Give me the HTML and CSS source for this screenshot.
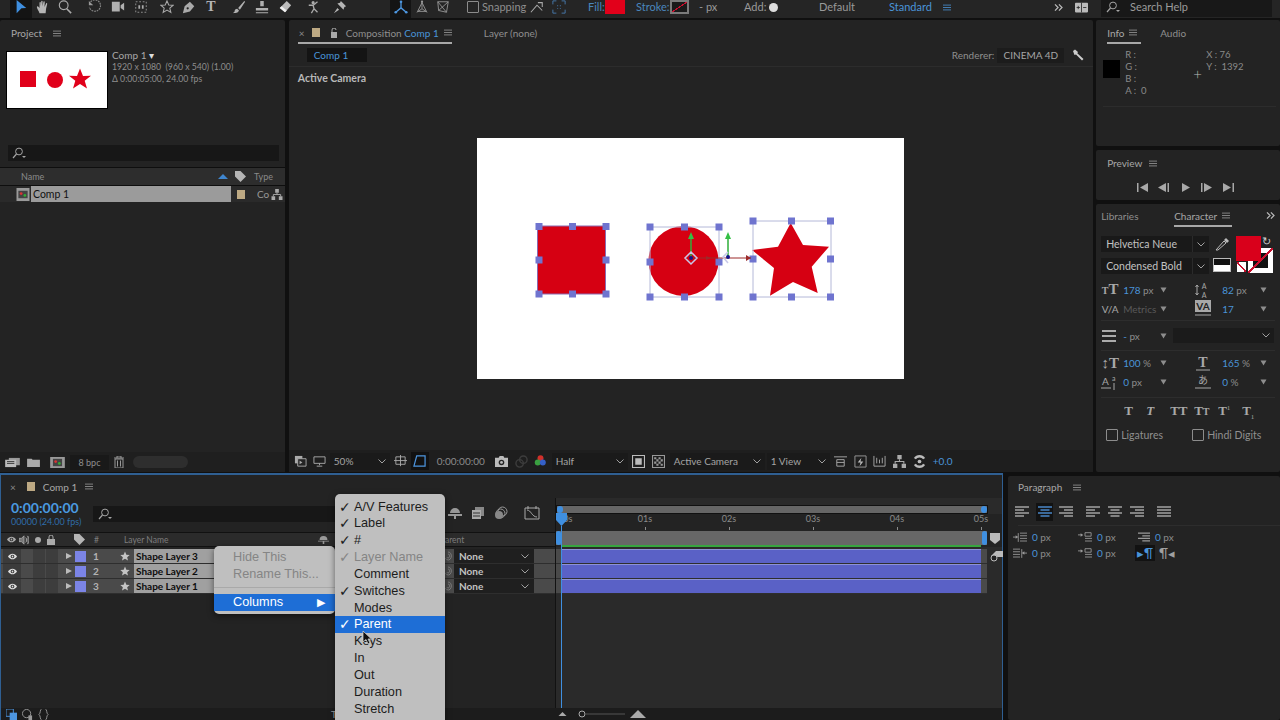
FILE: index.html
```html
<!DOCTYPE html>
<html lang="en">
<head>
    <meta charset="UTF-8">
    <title>After Effects</title>
    <link rel="stylesheet" href="styles.css">
</head>
<body>
<svg class="sprite">
    <symbol id="menu" viewBox="0 0 10 8"><path d="M0 1h10M0 4h10M0 7h10" stroke="currentColor" stroke-width="1" fill="none"/></symbol>
    <symbol id="more" viewBox="0 0 10 8"><path d="M1 .5 4.500 4 1 7.500M5.500 .5 9 4 5.500 7.500" stroke="currentColor" stroke-width="1.400" fill="none"/></symbol>
    <symbol id="eye" viewBox="0 0 12 8"><path d="M0 4c3-5 9-5 12 0-3 5-9 5-12 0z" fill="currentColor"/><circle cx="6" cy="4" r="2.4" fill="#2a2a2a"/><circle cx="6" cy="4" r="1.2" fill="currentColor"/></symbol>
    <symbol id="chev" viewBox="0 0 8 5"><path d="M.5.5 4 4 7.5.5" stroke="currentColor" stroke-width="1" fill="none"/></symbol>
    <symbol id="tri" viewBox="0 0 8 7"><path d="M.5.5h7L4 6.5z" fill="currentColor"/></symbol>
    <symbol id="star" viewBox="0 0 12 12"><path d="M6 .5 7.6 4.4l4 .3-3 2.7 1 4.1L6 9.3l-3.6 2.2 1-4.1-3-2.7 4-.3z" fill="currentColor"/></symbol>
    <symbol id="search" viewBox="0 0 14 12"><circle cx="7" cy="4.5" r="3.4" stroke="currentColor" fill="none"/><path d="M4.5 7 1 11" stroke="currentColor" stroke-width="1.2"/><path d="M10 9h4l-2 2z" fill="currentColor"/></symbol>
    <symbol id="flow" viewBox="0 0 12 12"><path d="M4 0h4v4H4zM0 8h4v4H0zM8 8h4v4H8z" fill="currentColor"/><path d="M6 4v2M2 8V6h8v2" stroke="currentColor" fill="none"/></symbol>
    <symbol id="align" viewBox="0 0 14 12"><path d="M0 1h14M0 4h14M0 7h14M0 10h14" stroke="currentColor" stroke-width="1.4" fill="none"/></symbol>
    <symbol id="alignl" viewBox="0 0 14 12"><path d="M0 1h14M0 4h9M0 7h14M0 10h9" stroke="currentColor" stroke-width="1.4" fill="none"/></symbol>
    <symbol id="alignc" viewBox="0 0 14 12"><path d="M0 1h14M2.500 4h9M0 7h14M2.500 10h9" stroke="currentColor" stroke-width="1.4" fill="none"/></symbol>
    <symbol id="alignr" viewBox="0 0 14 12"><path d="M0 1h14M5 4h9M0 7h14M5 10h9" stroke="currentColor" stroke-width="1.4" fill="none"/></symbol>
    <symbol id="indent" viewBox="0 0 16 12"><path d="M8 1h8M8 4h8M8 7h8M8 10h8M6 1v10" stroke="currentColor" fill="none"/><path d="M0 5.500h4" stroke="currentColor"/><path d="M3 3.500 6 5.500 3 7.500z" fill="currentColor"/></symbol>
    <symbol id="space" viewBox="0 0 16 12"><path d="M8 .5h7v4H8z M8 7h8M8 10h8" stroke="currentColor" fill="none"/><path d="M0 3h4" stroke="currentColor"/><path d="M3 1 6 3 3 5z" fill="currentColor"/></symbol>
    <symbol id="whip" viewBox="0 0 10 12"><path d="M5 1a4 5 0 1 1-3 8M5 3.500a2 2.500 0 1 1-1.500 4" stroke="currentColor" fill="none"/></symbol>
</svg>

<div class="app">
    <header class="toolbar">
        <div class="grip"></div>
        <div class="tools tools-select">
            <span class="tool is-on"><svg viewBox="0 0 16 16"><path d="M3 0 14 9 8.500 9.500 3 15z" fill="#3f8fe0"/></svg></span>
            <span class="tool"><svg viewBox="0 0 16 16"><path d="M4 15C3 12 1 10 1 8c0-1 1.500-1 2 0l1 1V3c0-1 1.500-1 1.500 0v4l.5-5.500c0-1 1.500-1 1.500 0V7l1-5c.2-1 1.500-.8 1.500.2L9.700 8 11.500 4c.4-.9 1.500-.5 1.300.5L11.500 10 11 15z" fill="#b5b5b5"/></svg></span>
            <span class="tool"><svg viewBox="0 0 16 16"><circle cx="6.500" cy="6" r="5" stroke="#aaa" stroke-width="1.300" fill="none"/><path d="m10 10 5 5" stroke="#aaa" stroke-width="1.800"/></svg></span>
        </div>
        <div class="tools tools-camera">
            <span class="tool"><svg viewBox="0 0 16 16"><path d="M3 2a6.500 6.500 0 1 1-1.500 6" stroke="#888" stroke-width="1.300" stroke-dasharray="2 1" fill="none"/><path d="M1 1v5h5" fill="#999"/></svg></span>
            <span class="tool"><svg viewBox="0 0 16 16"><path d="M1 2h9v11H1zM11 6l4-3v9l-4-3z" fill="#b0b0b0"/></svg></span>
            <span class="tool"><svg viewBox="0 0 16 16"><path d="M2 2h12v12H2z" stroke="#999" stroke-dasharray="2 2" fill="none"/><path d="M5 6h2v4H5zM9 6h2v4H9z" fill="#aaa"/></svg></span>
        </div>
        <div class="tools tools-shape">
            <span class="tool"><svg viewBox="0 0 16 16"><path d="M8 1l2 4.600 5 .4-3.800 3.300 1.200 5L8 11.600 3.600 14.300l1.200-5L1 6l5-.4z" stroke="#aaa" stroke-width="1.200" fill="none"/></svg></span>
            <span class="tool"><svg viewBox="0 0 16 16"><path d="M1 15 3 7l6-5 5 5-5 6z" fill="#aaa"/><circle cx="6.500" cy="9.500" r="1.300" fill="#232323"/></svg></span>
            <span class="tool tool-text">T</span>
        </div>
        <div class="tools tools-paint">
            <span class="tool"><svg viewBox="0 0 16 16"><path d="M14 1 7 9l2 2 6-9zM6 10c-2 0-3 1-3 3l-2 2c3 0 6 0 7-3z" fill="#b0b0b0"/></svg></span>
            <span class="tool"><svg viewBox="0 0 16 16"><path d="M6 1h4v6H6zM1 9h14v3H1zM1 14h14v1H1z" fill="#b0b0b0"/></svg></span>
            <span class="tool"><svg viewBox="0 0 16 16"><path d="M10 1l5 5-7 8-6-5z" fill="#bbb"/><path d="M2 9l6 5 2-2-6-5z" fill="#eee"/></svg></span>
        </div>
        <div class="tools tools-puppet">
            <span class="tool"><svg viewBox="0 0 16 16"><circle cx="7" cy="3" r="1.800" fill="#aaa"/><path d="M2 6l5 0 5-4M7 6l1 4-3 5M8 10l4 4" stroke="#aaa" stroke-width="1.500" fill="none"/></svg></span>
            <span class="tool"><svg viewBox="0 0 16 16"><path d="M9 1l6 6-2 1-1 3-7-7 3-1zM5 9l-4 6 6-4z" fill="#b5b5b5"/></svg></span>
        </div>
        <div class="tools tools-axis">
            <span class="tool is-on"><svg viewBox="0 0 16 16"><path d="M8 2v7M8 9l-6 5M8 9l6 5" stroke="#4d96e0" stroke-width="1.500"/><circle cx="8" cy="2" r="1.500" fill="#4d96e0"/><circle cx="2" cy="14" r="1.500" fill="#4d96e0"/><circle cx="14" cy="14" r="1.500" fill="#4d96e0"/></svg></span>
            <span class="tool"><svg viewBox="0 0 16 16"><path d="M8 3 3 13h10z" stroke="#999" fill="none"/><path d="M8 3v7M8 10l-6 4M8 10l6 4" stroke="#999"/><circle cx="8" cy="2" r="1.300" fill="#999"/></svg></span>
            <span class="tool"><svg viewBox="0 0 16 16"><path d="M2 2l12 0-2 12-9-2zM2 2l10 12M14 2 3 12" stroke="#999" fill="none"/></svg></span>
        </div>
        <div class="snap"><span class="check"></span><span class="snap-label">Snapping</span></div>
        <div class="snap-icons">
            <svg viewBox="0 0 16 16"><path d="M1 14 8 6l6 6M9 3h5v5" stroke="#aaa" stroke-width="1.200" fill="none"/></svg>
            <svg viewBox="0 0 16 16"><path d="M1 5V1h4M11 1h4v4M15 11v4h-4M5 15H1v-4" stroke="#4a7fb5" fill="none"/><path d="M6 6h1v1H6zM9 6h1v1H9zM6 9h1v1H6zM9 9h1v1H9z" fill="#4a7fb5"/></svg>
        </div>
        <div class="fill-group"><span class="blue">Fill:</span><span class="fill-swatch"></span></div>
        <div class="stroke-group"><span class="blue">Stroke:</span><span class="stroke-swatch"></span></div>
        <span class="stroke-px">- px</span>
        <div class="add"><span>Add:</span><span class="add-dot"></span></div>
        <span class="ws-default">Default</span>
        <span class="ws-standard blue">Standard</span>
        <svg class="ws-menu ic-menu blue"><use href="#menu"/></svg>
        <svg class="ic-more ws-more"><use href="#more"/></svg>
        <svg class="ws-icon" viewBox="0 0 16 12"><rect width="16" height="12" rx="1" fill="#bbb"/><path d="M8 0v12" stroke="#222"/><path d="M2 6h4M4 4v4M10 6h4" stroke="#222"/></svg>
        <div class="help"><svg class="ic-search"><use href="#search"/></svg><span>Search Help</span></div>
    </header>

    <div class="top">
        <section class="panel project">
            <div class="tabs"><span class="tab-title">Project</span><svg class="ic-menu"><use href="#menu"/></svg></div>
            <div class="proj-info">
                <svg class="thumb" viewBox="0 0 100 56">
                    <rect width="100" height="56" fill="#fff"/>
                    <rect x="13" y="19" width="16" height="16" fill="#e0001a"/>
                    <circle cx="48" cy="28" r="8" fill="#e0001a"/>
                    <path d="M73 16.500 76 24l8-.3-6.300 5 2.300 7.800-7-4.500-7 4.500 2.300-7.800-6.300-5 8 .3z" fill="#e0001a"/>
                </svg>
                <div class="proj-text">
                    <div class="proj-name">Comp 1 <span class="caret">&#9662;</span></div>
                    <div>1920 x 1080&nbsp; (960 x 540) (1.00)</div>
                    <div>&Delta; 0:00:05:00, 24.00 fps</div>
                </div>
            </div>
            <div class="search-box"><svg class="ic-search"><use href="#search"/></svg></div>
            <div class="proj-head">
                <span class="ph-name">Name</span>
                <svg class="ph-sort" viewBox="0 0 10 5"><path d="M0 5 5 0l5 5z" fill="#3f86cf"/></svg>
                <svg class="ph-tag" viewBox="0 0 12 12"><path d="M0 0h6l6 6-6 6-6-6z" fill="#b5b5b5"/></svg>
                <span class="ph-type">Type</span>
            </div>
            <div class="proj-row">
                <svg class="comp-icon" viewBox="0 0 14 14"><rect width="14" height="14" fill="#9a9a9a"/><rect x="2" y="3" width="10" height="8" fill="#444"/><circle cx="5" cy="6" r="1.500" fill="#d33"/><circle cx="9" cy="8" r="1.500" fill="#3a3"/></svg>
                <span class="comp-name">Comp 1</span>
                <span class="swatch-sand"></span>
                <span class="comp-type">Co</span>
                <svg class="ic-flow"><use href="#flow"/></svg>
            </div>
            <div class="spacer"></div>
            <div class="proj-foot">
                <svg class="foot-ic" viewBox="0 0 16 12"><path d="M4 1h12v8H4z" fill="#999"/><path d="M0 3h12v8H0z" fill="#bbb"/><path d="M2 5h8M2 7h8" stroke="#333"/></svg>
                <svg class="foot-ic" viewBox="0 0 16 12"><path d="M1 2h5l1 1h8v8H1z" fill="#aaa"/></svg>
                <svg class="foot-ic" viewBox="0 0 16 12"><rect width="16" height="12" fill="#9a9a9a"/><rect x="3" y="2" width="10" height="8" fill="#444"/><circle cx="6" cy="5" r="1.500" fill="#d33"/><circle cx="10" cy="7" r="1.500" fill="#3a3"/></svg>
                <span class="bpc">8 bpc</span>
                <svg class="foot-trash" viewBox="0 0 10 12"><path d="M0 2h10M3 2V0h4v2M1 3h8v9H1zM3.500 4.500v6M6.500 4.500v6" stroke="#999" fill="none"/></svg>
                <span class="pill"></span>
            </div>
        </section>

        <section class="panel comp">
            <div class="tabs comp-tabs">
                <div class="tab-on comp-tab">
                    <span class="close">&times;</span>
                    <span class="swatch-sand"></span>
                    <svg class="lock" viewBox="0 0 8 10"><path d="M1 4h6v6H1z" fill="#aaa"/><path d="M2 4V2a2 2 0 0 1 4 0" stroke="#aaa" fill="none"/></svg>
                    <span class="tab-title">Composition <span class="blue">Comp 1</span></span>
                    <svg class="ic-menu"><use href="#menu"/></svg>
                </div>
                <span class="tab-title layer-tab">Layer (none)</span>
            </div>
            <div class="comp-sub">
                <span class="comp-chip blue">Comp 1</span>
                <span class="renderer">Renderer:</span>
                <span class="renderer-chip">CINEMA 4D</span>
                <svg class="wrench" viewBox="0 0 12 12"><path d="M1 2 3 .5 6 3 5.300 4.200 11.500 10 10 11.500 4 5.500 2.500 6z" fill="#ccc"/></svg>
            </div>
            <div class="viewer">
                <span class="cam-label">Active Camera</span>
                <svg class="canvas" viewBox="477 138 427 241">
                    <rect x="477" y="138" width="427" height="241" fill="#fff"/>
                    <rect x="537.500" y="226" width="68" height="68" fill="#d60012" stroke="#8a6ab0"/>
                    <circle cx="683.500" cy="261" r="35" fill="#d60012"/>
                    <path d="M790.700 223 803 245 829 246.700 811.700 266.700 817.700 293 793 282 770 295.700 774 268 752 250 778 246.700z" fill="#d60012"/>
                    <path class="bbox" d="M650 227h69v70h-69zM753 221h78v76h-78z"/>
                    <g class="handles">
                        <rect x="535.500" y="223" width="7" height="7"/><rect x="569" y="223" width="7" height="7"/><rect x="602.500" y="223" width="7" height="7"/>
                        <rect x="535.500" y="256.500" width="7" height="7"/><rect x="602.500" y="256.500" width="7" height="7"/>
                        <rect x="535.500" y="290.500" width="7" height="7"/><rect x="569" y="290.500" width="7" height="7"/><rect x="602.500" y="290.500" width="7" height="7"/>
                        <rect x="646.500" y="223.500" width="7" height="7"/><rect x="681" y="223.500" width="7" height="7"/><rect x="715.500" y="223.500" width="7" height="7"/>
                        <rect x="646.500" y="258.500" width="7" height="7"/><rect x="715.500" y="258.500" width="7" height="7"/>
                        <rect x="646.500" y="293.500" width="7" height="7"/><rect x="681" y="293.500" width="7" height="7"/><rect x="715.500" y="293.500" width="7" height="7"/>
                        <rect x="749.500" y="217.500" width="7" height="7"/><rect x="788" y="217.500" width="7" height="7"/><rect x="827" y="217.500" width="7" height="7"/>
                        <rect x="749.500" y="255.500" width="7" height="7"/><rect x="827" y="255.500" width="7" height="7"/>
                        <rect x="749.500" y="293.500" width="7" height="7"/><rect x="788" y="293.500" width="7" height="7"/><rect x="827" y="293.500" width="7" height="7"/>
                    </g>
                    <path d="M691 258V238M728 257V238" stroke="#2fae3a" stroke-width="1.500"/>
                    <path d="M691 232l-3 7h6zM728 232l-3 7h6z" fill="#35c045"/>
                    <path d="M691 258h60" stroke="#9c2a2a"/>
                    <path d="M706 256l5 2-5 2zM746 255l5 3-5 3z" fill="#9c2a2a"/>
                    <path d="M691 252l6 6-6 6-6-6zM728 252l-5 5 5 6" stroke="#c8c8e8" stroke-width="1.500" fill="none"/>
                    <circle cx="691" cy="258" r="2" fill="#14148a"/><circle cx="728" cy="257" r="2" fill="#14148a"/>
                </svg>
            </div>
            <div class="viewer-bar">
                <svg viewBox="0 0 14 12"><path d="M1 0h8v8H1z" fill="#aaa"/><path d="M4 3h9v8H4z" stroke="#aaa" fill="#232323"/><path d="M6 5l3 2-3 2z" fill="#aaa"/></svg>
                <svg viewBox="0 0 14 12"><path d="M1 1h12v7H1z" stroke="#aaa" fill="none"/><path d="M7 8v2M4 11h6" stroke="#aaa"/></svg>
                <div class="vb-drop"><span>50%</span><svg class="ic-chev"><use href="#chev"/></svg></div>
                <svg viewBox="0 0 14 14"><path d="M2 2h10v8H2zM7 0v12M0 6h14" stroke="#aaa" fill="none"/></svg>
                <span class="vb-on"><svg viewBox="0 0 14 14"><path d="M4 1h9v11H1z" stroke="#4d96e0" stroke-width="1.300" fill="none"/></svg></span>
                <span class="vb-time">0:00:00:00</span>
                <svg viewBox="0 0 14 12"><path d="M0 2h4l1-2h4l1 2h4v10H0z" fill="#bbb"/><circle cx="7" cy="7" r="3" fill="#232323"/><circle cx="7" cy="7" r="1.500" fill="#bbb"/></svg>
                <svg viewBox="0 0 14 14"><circle cx="5" cy="9" r="4" stroke="#3d3d3d" stroke-width="1.500" fill="none"/><circle cx="9" cy="5" r="4" stroke="#3d3d3d" stroke-width="1.500" fill="none"/></svg>
                <svg viewBox="0 0 14 14"><circle cx="7" cy="3.500" r="3.200" fill="#d0302a"/><circle cx="4" cy="8" r="3.200" fill="#3aa040"/><circle cx="9.500" cy="8" r="3.200" fill="#3560c8"/></svg>
                <div class="vb-drop"><span>Half</span><svg class="ic-chev"><use href="#chev"/></svg></div>
                <svg viewBox="0 0 12 12"><path d="M.5.500h11v11H.5z" stroke="#bbb" fill="none"/><path d="M3 3h6v6H3z" fill="#bbb"/></svg>
                <svg viewBox="0 0 12 12"><path d="M.5.500h11v11H.5z" stroke="#999" fill="none"/><path d="M2 2h2v2H2zM6 2h2v2H6zM4 4h2v2H4zM8 4h2v2H8zM2 6h2v2H2zM6 6h2v2H6zM4 8h2v2H4zM8 8h2v2H8z" fill="#999"/></svg>
                <div class="vb-drop"><span>Active Camera</span><svg class="ic-chev"><use href="#chev"/></svg></div>
                <div class="vb-drop"><span>1 View</span><svg class="ic-chev"><use href="#chev"/></svg></div>
                <svg viewBox="0 0 14 14"><path d="M0 2h14M3 5h8v7H3zM3 8h8" stroke="#aaa" fill="none"/></svg>
                <svg viewBox="0 0 14 14"><path d="M1 1h12v12H1z" stroke="#999" fill="none"/><path d="M8 3 4 8h3l-1 4 4-5H7z" fill="#bbb"/></svg>
                <svg viewBox="0 0 14 14"><path d="M1 1v11h12V1M4 3v6M7 5v4M10 3v6" stroke="#aaa" fill="none"/></svg>
                <svg class="vb-flow"><use href="#flow"/></svg>
                <svg viewBox="0 0 14 14"><path d="M2 4a6 6 0 0 1 10 0M12 10a6 6 0 0 1-10 0" stroke="#bbb" stroke-width="2.500" fill="none"/><circle cx="7" cy="7" r="2" fill="#bbb"/></svg>
                <span class="blue vb-exp">+0.0</span>
            </div>
        </section>

        <div class="right-col">
            <section class="panel info">
                <div class="tabs side-tabs">
                    <div class="tab-on info-tab"><span class="tab-title">Info</span><svg class="ic-menu"><use href="#menu"/></svg></div>
                    <span class="tab-title audio-tab">Audio</span>
                </div>
                <div class="info-body">
                    <span class="info-swatch"></span>
                    <div class="info-rgba"><div>R :</div><div>G :</div><div>B :</div><div>A :&nbsp; 0</div></div>
                    <div class="info-cross">+</div>
                    <div class="info-xy"><div>X : 76</div><div>Y :&nbsp; 1392</div></div>
                </div>
            </section>
            <section class="panel preview">
                <div class="tabs side-tabs"><span class="tab-title">Preview</span><svg class="ic-menu preview-menu"><use href="#menu"/></svg></div>
                <div class="transport">
                    <svg viewBox="0 0 11 9"><path d="M0 0h1.500v9H0zM11 0v9L3 4.500z"/></svg>
                    <svg viewBox="0 0 11 9"><path d="M8 0v9L0 4.500zM9.500 0H11v9H9.500z"/></svg>
                    <svg viewBox="0 0 11 9"><path d="M2 0v9l8-4.500z"/></svg>
                    <svg viewBox="0 0 11 9"><path d="M0 0h1.500v9H0zM3 0v9l8-4.500z"/></svg>
                    <svg viewBox="0 0 11 9"><path d="M0 0v9l8-4.500zM9.500 0H11v9H9.500z"/></svg>
                </div>
            </section>
            <section class="panel character">
                <div class="tabs char-tabs">
                    <span class="tab-title libs">Libraries</span>
                    <div class="tab-on char-tab"><span class="tab-title">Character</span><svg class="ic-menu"><use href="#menu"/></svg></div>
                    <svg class="ic-more char-more"><use href="#more"/></svg>
                </div>
                <div class="font-block">
                    <div class="font-drops">
                        <div class="font-drop"><span>Helvetica Neue</span><i><svg class="ic-chev"><use href="#chev"/></svg></i></div>
                        <div class="font-drop"><span>Condensed Bold</span><i><svg class="ic-chev"><use href="#chev"/></svg></i></div>
                    </div>
                    <div class="font-tools">
                        <svg class="dropper" viewBox="0 0 14 14"><path d="M1 13 9 4l2 2-8 7z" stroke="#bbb" fill="none"/><path d="M9 3l2-2 3 3-2 2z" fill="#bbb"/></svg>
                        <div class="bw-chip"></div>
                    </div>
                    <div class="colors">
                        <div class="col-stroke"></div>
                        <div class="col-fill"></div>
                        <div class="col-none"></div>
                        <span class="col-swap">&#8635;</span>
                    </div>
                </div>
                <div class="char-row">
                    <span class="glyph"><small>T</small>T</span><span class="val"><b>178</b> px</span><svg class="ic-tri"><use href="#tri"/></svg>
                    <svg class="glyph-svg glyph-lead" viewBox="0 0 18 18"><text x="10" y="7.500" text-anchor="middle">A</text><text x="10" y="16.500" text-anchor="middle">A</text><path d="M3 4v10M1.500 6 3 4l1.500 2M1.500 12 3 14l1.500-2" stroke="#a8a8a8" fill="none"/></svg><span class="val"><b>82</b> px</span><svg class="ic-tri"><use href="#tri"/></svg>
                </div>
                <div class="char-row">
                    <span class="glyph glyph-va">V/A</span><span class="val val-dim">Metrics</span><svg class="ic-tri"><use href="#tri"/></svg>
                    <svg class="glyph-svg" viewBox="0 0 18 18"><rect x="1" y="0" width="16" height="12" fill="#a8a8a8"/><text class="dark" x="9" y="10" text-anchor="middle">VA</text><path d="M1 15h16" stroke="#a8a8a8"/></svg><span class="val"><b>17</b></span><svg class="ic-tri"><use href="#tri"/></svg>
                </div>
                <div class="char-sep"></div>
                <div class="char-row char-stroke">
                    <svg class="ic-lines" viewBox="0 0 14 12"><path d="M0 1h14M0 6h14M0 11h14" stroke="#aaa" stroke-width="2"/></svg>
                    <span class="val"><b>-</b> px</span><svg class="ic-tri"><use href="#tri"/></svg>
                    <div class="stroke-drop"><svg class="ic-chev"><use href="#chev"/></svg></div>
                </div>
                <div class="char-sep sep-b"></div>
                <div class="char-row">
                    <span class="glyph">&#8597;T</span><span class="val"><b>100</b> %</span><svg class="ic-tri"><use href="#tri"/></svg>
                    <svg class="glyph-svg" viewBox="0 0 18 18"><text class="big" x="9" y="13" text-anchor="middle">T</text><path d="M2 16h14" stroke="#a8a8a8"/></svg><span class="val"><b>165</b> %</span><svg class="ic-tri"><use href="#tri"/></svg>
                </div>
                <div class="char-row">
                    <svg class="glyph-base" viewBox="0 0 18 18"><text x="1" y="12">A</text><text class="tiny" x="11" y="8">a</text><path d="M0 15h10M13 10v7" stroke="#a8a8a8"/></svg><span class="val"><b>0</b> px</span><svg class="ic-tri"><use href="#tri"/></svg>
                    <svg class="glyph-svg" viewBox="0 0 18 18"><text class="cjk" x="9" y="11" text-anchor="middle">あ</text><path d="M1 15h16" stroke="#a8a8a8"/></svg><span class="val"><b>0</b> %</span><svg class="ic-tri"><use href="#tri"/></svg>
                </div>
                <div class="char-sep sep-c"></div>
                <div class="faux-row">
                    <span>T</span><span class="ital">T</span><span>TT</span><span>T<small>T</small></span><span>T<sup>1</sup></span><span>T<sub>1</sub></span>
                </div>
                <div class="check-row">
                    <span class="check"></span><span class="check-label">Ligatures</span>
                    <span class="check check-2"></span><span class="check-label">Hindi Digits</span>
                </div>
            </section>
        </div>
    </div>

    <div class="bottom">
        <section class="timeline">
            <div class="tl-tabs">
                <span class="close">&times;</span>
                <span class="swatch-sand"></span>
                <span class="tab-title">Comp 1</span>
                <svg class="ic-menu"><use href="#menu"/></svg>
            </div>
            <div class="tl-body">
                <div class="tl-left">
                    <div class="tl-ctrl">
                        <div class="tl-time">
                            <div class="time-big">0:00:00:00</div>
                            <div class="time-small">00000 (24.00 fps)</div>
                        </div>
                        <div class="tl-search"><svg class="ic-search"><use href="#search"/></svg></div>
                        <div class="tl-switches">
                            <svg viewBox="0 0 14 12"><path d="M7 1a5 5 0 0 1 5 5H2a5 5 0 0 1 5-5zM0 7h14v2H0zM6 9h2v3H6z" fill="#999"/></svg>
                            <svg viewBox="0 0 14 14"><path d="M4 1h9v9H4z" fill="#888"/><path d="M1 4h9v9H1z" fill="#aaa"/><path d="M2 7h7M2 10h7" stroke="#333"/></svg>
                            <svg viewBox="0 0 14 14"><circle cx="8.500" cy="5.500" r="4.500" stroke="#999" fill="none"/><circle cx="6.500" cy="7.500" r="4.500" stroke="#999" fill="none"/><circle cx="5" cy="9" r="4" fill="#888"/></svg>
                            <svg class="sw-graph" viewBox="0 0 16 14"><path d="M1 2h14v11H1z" stroke="#aaa" fill="none"/><path d="M3 4c4 0 5 7 10 7" stroke="#aaa" fill="none"/><path d="M4 0v3M12 0v3" stroke="#aaa"/></svg>
                        </div>
                    </div>
                    <div class="tl-head">
                        <svg class="lh-eye"><use href="#eye"/></svg>
                        <svg class="lh-sound" viewBox="0 0 12 12"><path d="M0 4h3l3-3v10L3 8H0zM8 3a4 4 0 0 1 0 6M10 1a6 6 0 0 1 0 10" stroke="#aaa" fill="#aaa" fill-opacity=".6"/></svg>
                        <span class="lh-dot"></span>
                        <svg class="lh-lock" viewBox="0 0 8 10"><path d="M0 4h8v6H0z" fill="#aaa"/><path d="M2 4V2a2 2 0 0 1 4 0v2" stroke="#aaa" fill="none"/></svg>
                        <svg class="lh-tag" viewBox="0 0 12 12"><path d="M0 0h6l6 6-6 6-6-6z" fill="#b5b5b5"/></svg>
                        <span class="lh-num">#</span>
                        <span class="lh-name">Layer Name</span>
                        <svg class="lh-sw" viewBox="0 0 14 12"><path d="M7 1a5 5 0 0 1 5 5H2a5 5 0 0 1 5-5zM0 7h14v1H0zM6 8h2v3H6z" fill="#999"/></svg>
                        <span class="lh-parent">Parent</span>
                    </div>
                    <div class="layer">
                        <span class="l-eye"><svg><use href="#eye"/></svg></span><i class="l-box"></i><i class="l-box"></i>
                        <span class="l-tri"></span><span class="l-label"></span><span class="l-num">1</span>
                        <svg class="l-star"><use href="#star"/></svg><span class="l-name">Shape Layer 3</span>
                        <span class="l-whip"><svg><use href="#whip"/></svg></span>
                        <span class="l-parent"><span>None</span><svg class="ic-chev"><use href="#chev"/></svg></span>
                    </div>
                    <div class="layer">
                        <span class="l-eye"><svg><use href="#eye"/></svg></span><i class="l-box"></i><i class="l-box"></i>
                        <span class="l-tri"></span><span class="l-label"></span><span class="l-num">2</span>
                        <svg class="l-star"><use href="#star"/></svg><span class="l-name">Shape Layer 2</span>
                        <span class="l-whip"><svg><use href="#whip"/></svg></span>
                        <span class="l-parent"><span>None</span><svg class="ic-chev"><use href="#chev"/></svg></span>
                    </div>
                    <div class="layer">
                        <span class="l-eye"><svg><use href="#eye"/></svg></span><i class="l-box"></i><i class="l-box"></i>
                        <span class="l-tri"></span><span class="l-label"></span><span class="l-num">3</span>
                        <svg class="l-star"><use href="#star"/></svg><span class="l-name">Shape Layer 1</span>
                        <span class="l-whip"><svg><use href="#whip"/></svg></span>
                        <span class="l-parent"><span>None</span><svg class="ic-chev"><use href="#chev"/></svg></span>
                    </div>
                </div>
                <div class="tl-right">
                    <div class="tl-nav"><i></i><i></i></div>
                    <div class="ruler">
                        <span class="r-first">00s</span>
                        <span>01s</span><span>02s</span><span>03s</span><span>04s</span><span>05s</span>
                    </div>
                    <div class="work-row">
                        <div class="work"><i></i><i></i></div>
                        <svg class="shield" viewBox="0 0 10 11"><path d="M0 0h10v7l-5 4-5-4z" fill="#bbb"/></svg>
                    </div>
                    <div class="green-row"><div class="green"></div></div>
                    <div class="track"><div class="bar"></div><svg class="track-ic" viewBox="0 0 13 12"><path d="M1 6 6 1h7v6H8z" fill="#bbb"/><circle cx="4" cy="8" r="3" stroke="#bbb" fill="#232323"/></svg></div>
                    <div class="track"><div class="bar"></div></div>
                    <div class="track"><div class="bar"></div></div>
                    <div class="cti"><svg viewBox="0 0 11 13"><path d="M0 0h11v7l-5.500 6L0 7z" fill="#3f8fe0"/></svg><i></i></div>
                </div>
            </div>
            <div class="tl-foot">
                <svg class="tf-on" viewBox="0 0 12 12"><path d="M0 0h8v8H0z" stroke="#4d96e0" fill="none"/><path d="M4 4h8v8H4z" fill="#4d96e0"/></svg>
                <svg viewBox="0 0 12 12"><circle cx="5" cy="5" r="4.500" stroke="#999" fill="none"/><path d="M7 7h4v5H7z" fill="#999"/></svg>
                <svg viewBox="0 0 12 12"><path d="M4 0C2 0 3 5 1 6c2 1 1 6 3 6M8 0c2 0 1 5 3 6-2 1-1 6-3 6" stroke="#999" fill="none"/></svg>
                <span class="tf-toggle">T</span>
                <svg class="tf-small" viewBox="0 0 10 5"><path d="M0 5 5 0l5 5z" fill="#aaa"/></svg>
                <svg class="tf-slider" viewBox="0 0 50 8"><circle cx="4" cy="4" r="3" stroke="#aaa" fill="none"/><path d="M8 4h39" stroke="#555"/></svg>
                <svg class="tf-big" viewBox="0 0 16 8"><path d="M0 8 8 0l8 8z" fill="#aaa"/></svg>
            </div>
        </section>

        <section class="panel paragraph">
            <div class="tabs para-tabs"><span class="tab-title">Paragraph</span><svg class="ic-menu"><use href="#menu"/></svg></div>
            <div class="align-row">
                <svg><use href="#alignl"/></svg>
                <span class="align-on"><svg><use href="#alignc"/></svg></span>
                <svg><use href="#alignr"/></svg>
                <svg class="a-gap"><use href="#alignl"/></svg>
                <svg><use href="#alignc"/></svg>
                <svg><use href="#alignr"/></svg>
                <svg class="a-gap"><use href="#align"/></svg>
            </div>
            <div class="para-sep"></div>
            <div class="para-grid">
                <div class="pi"><svg><use href="#indent"/></svg><span class="val"><b>0</b> px</span></div>
                <div class="pi"><svg><use href="#space"/></svg><span class="val"><b>0</b> px</span></div>
                <div class="pi pi-3"><svg><use href="#alignr"/></svg><span class="val"><b>0</b> px</span></div>
                <div class="pi"><svg class="flip"><use href="#indent"/></svg><span class="val"><b>0</b> px</span></div>
                <div class="pi"><svg><use href="#space"/></svg><span class="val"><b>0</b> px</span></div>
                <div class="pi pi-dir"><span class="dir-on">&#9656;&para;</span><span class="dir">&para;&#9666;</span></div>
            </div>
        </section>
    </div>

    <div class="ctx ctx-layer">
        <div class="ctx-item is-off">Hide This</div>
        <div class="ctx-item is-off">Rename This...</div>
        <div class="ctx-sep"></div>
        <div class="ctx-item is-hot">Columns<span class="ctx-arrow">&#9654;</span></div>
    </div>
    <div class="ctx ctx-cols">
        <div class="ctx-item is-checked">A/V Features</div>
        <div class="ctx-item is-checked">Label</div>
        <div class="ctx-item is-checked">#</div>
        <div class="ctx-item is-checked is-off">Layer Name</div>
        <div class="ctx-item">Comment</div>
        <div class="ctx-item is-checked">Switches</div>
        <div class="ctx-item">Modes</div>
        <div class="ctx-item is-checked is-hot">Parent</div>
        <div class="ctx-item">Keys</div>
        <div class="ctx-item">In</div>
        <div class="ctx-item">Out</div>
        <div class="ctx-item">Duration</div>
        <div class="ctx-item">Stretch</div>
    </div>
    <svg class="cursor" viewBox="0 0 10 14"><path d="M1 0v11l3-2.500 2 4.500 2-1-2-4h3.500z" fill="#111" stroke="#ddd" stroke-width=".7"/></svg>
</div>
</body>
</html>
```

FILE: styles.css
```css
html,body{
    margin:0;
    width:1280px;
    height:720px;
    overflow:hidden;
    background:#101010;
}
body{
    font-family:Lato,"Open Sans",sans-serif;
    font-size:10px;
    color:#a3a3a3;
}
svg{
    display:block;
    flex:none;
}
.sprite{
    display:none;
}
.app{
    position:relative;
    width:1280px;
    height:720px;
    overflow:hidden;
    display:flex;
    flex-direction:column;
}
.blue{
    color:#4a94d8;
}
.panel{
    background:#232323;
    border-radius:2px;
}
.spacer{
    flex:1;
}
.ic-menu{
    width:8px;
    height:7px;
    color:#9a9a9a;
}
.ic-more{
    width:9px;
    height:7px;
    color:#bbb;
}
.ic-chev{
    width:8px;
    height:5px;
    color:#a0a0a0;
}
.ic-search{
    width:14px;
    height:12px;
    color:#a5a5a5;
}
.ic-tri{
    width:7px;
    height:6px;
    color:#8d8d8d;
}
.check{
    display:block;
    width:10px;
    height:10px;
    border:1px solid #8c8c8c;
    border-radius:1px;
    flex:none;
}
.swatch-sand{
    display:block;
    width:8px;
    height:9px;
    background:#bda983;
    flex:none;
}
.close{
    color:#8a8a8a;
    font-size:10px;
}

/* toolbar */
.toolbar{
    height:18px;
    box-sizing:border-box;
    padding-bottom:4px;
    flex:none;
    margin-bottom:2px;
    background:#252525;
    display:flex;
    align-items:center;
    font-size:11px;
    line-height:14px;
    color:#999;
}
.grip{
    width:10px;
}
.tools{
    display:flex;
    align-items:center;
}
.tool{
    width:22px;
    height:14px;
    display:flex;
    align-items:center;
    justify-content:center;
}
.tool svg{
    width:14px;
    height:14px;
}
.tool.is-on{
    height:18px;
    margin-bottom:-4px;
    padding-bottom:4px;
    box-sizing:border-box;
    background:#141414;
}
.tool-text{
    font-family:"Liberation Serif",serif;
    font-size:14px;
    font-weight:700;
    color:#b5b5b5;
}
.tools-camera{
    margin-left:7px;
}
.tools-camera .tool,.tools-paint .tool{
    width:23px;
}
.tools-shape{
    margin-left:4px;
}
.tools-paint{
    margin-left:5px;
}
.tools-puppet{
    margin-left:5px;
}
.tools-puppet .tool{
    width:26px;
}
.tools-axis{
    margin-left:37px;
}
.tools-axis .tool{
    width:21px;
}
.snap{
    margin-left:14px;
    display:flex;
    align-items:center;
    width:63px;
    gap:3px;
}
.snap-label{
    color:#8f8f8f;
}
.snap-icons{
    display:flex;
    gap:8px;
}
.snap-icons svg{
    width:14px;
    height:14px;
}
.fill-group{
    margin-left:22px;
    display:flex;
    align-items:flex-start;
    height:14px;
    width:37px;
}
.fill-group .blue,.stroke-group .blue{
    color:#4a86bd;
}
.fill-swatch{
    width:21px;
    height:14px;
    margin-left:auto;
    background:#e2001a;
}
.stroke-group{
    margin-left:11px;
    display:flex;
    align-items:flex-start;
    height:14px;
    width:53px;
}
.stroke-swatch{
    width:21px;
    height:14px;
    margin-left:auto;
    border:2px solid #7b7b7b;
    box-sizing:border-box;
    background:linear-gradient(to bottom right,#1a1a1a 46%,#c8102e 46%,#c8102e 54%,#1a1a1a 54%);
}
.stroke-px{
    margin-left:10px;
    width:20px;
}
.add{
    margin-left:25px;
    display:flex;
    align-items:center;
    gap:3px;
    width:36px;
}
.add-dot{
    width:9px;
    height:9px;
    border-radius:50%;
    background:#ddd;
}
.ws-default{
    margin-left:39px;
    width:70px;
}
.ws-standard{
    width:54px;
}
.ws-menu{
    color:#4a94d8;
}
.ws-more{
    margin-left:103px;
    margin-right:12px;
}
.ws-icon{
    width:13px;
    height:11px;
}
.help{
    margin-left:13px;
    margin-bottom:-3px;
    width:171px;
    height:17px;
    background:#181818;
    display:flex;
    align-items:center;
    gap:10px;
    padding:0 0 3px 5px;
    box-sizing:border-box;
    font-size:11px;
    color:#9b9b9b;
}

/* panel layout */
.top{
    height:452px;
    flex:none;
    display:flex;
    gap:3px;
}
.bottom{
    flex:1;
    margin-top:1px;
    display:flex;
    gap:5px;
    min-height:0;
}
.project{
    width:285px;
    display:flex;
    flex-direction:column;
}
.comp{
    width:805px;
    margin-left:1px;
    display:flex;
    flex-direction:column;
}
.right-col{
    width:184px;
    display:flex;
    flex-direction:column;
    gap:4px;
}
.tabs{
    display:flex;
    align-items:center;
    flex:none;
}
.tab-title{
    color:#a8a8a8;
    font-size:10px;
}
.tab-on{
    display:flex;
    align-items:center;
    height:24px;
    padding-top:3px;
    border-bottom:2px solid #a8a8a8;
    box-sizing:border-box;
}

/* project */
.project .tabs{
    height:26px;
    padding-left:11px;
    gap:11px;
}
.proj-info{
    height:93px;
    margin-top:6px;
    padding-left:7px;
    display:flex;
    gap:5px;
    flex:none;
}
.thumb{
    width:100px;
    height:56px;
    outline:1px solid #000;
}
.proj-text{
    margin-top:-3px;
    line-height:12px;
    font-size:8.700px;
    color:#8e8e8e;
    white-space:nowrap;
}
.proj-name{
    font-size:10px;
    color:#a8a8a8;
}
.caret{
    color:#ddd;
}
.search-box{
    margin:0 6px 0 8px;
    height:16px;
    background:#171717;
    display:flex;
    align-items:center;
    padding-left:4px;
    flex:none;
}
.proj-head{
    margin-top:6px;
    height:17px;
    border-top:1px solid #0e0e0e;
    border-bottom:1px solid #0e0e0e;
    background:#2d2d2d;
    display:flex;
    align-items:center;
    font-size:9px;
    color:#8a8a8a;
    flex:none;
}
.ph-name{
    width:218px;
    padding-left:21px;
    box-sizing:border-box;
}
.ph-sort{
    width:10px;
    height:5px;
}
.ph-tag{
    width:11px;
    height:11px;
    margin-left:7px;
}
.ph-type{
    margin-left:8px;
}
.proj-row{
    height:16px;
    display:flex;
    align-items:center;
    background:#2a2a2a;
    padding-left:16px;
    flex:none;
}
.comp-icon{
    width:14px;
    height:13px;
}
.comp-name{
    margin-left:1px;
    width:200px;
    height:16px;
    line-height:16px;
    background:#9b9b9b;
    color:#111;
    font-size:10.500px;
    padding-left:2px;
    box-sizing:border-box;
}
.proj-row .swatch-sand{
    margin-left:6px;
}
.comp-type{
    margin-left:12px;
    color:#999;
    width:13px;
    overflow:hidden;
}
.ic-flow{
    width:12px;
    height:11px;
    margin-left:1px;
    color:#aaa;
}
.proj-foot{
    height:20px;
    background:#1f1f1f;
    display:flex;
    align-items:center;
    padding-left:5px;
    flex:none;
}
.foot-ic{
    width:15px;
    height:11px;
    margin-right:6px;
}
.foot-ic:nth-child(2){
    margin-right:9px;
}
.foot-ic:nth-child(3){
    margin-right:3px;
}
.bpc{
    width:39px;
    margin-left:2px;
    height:15px;
    line-height:15px;
    text-align:center;
    background:#191919;
    font-size:9px;
    color:#8f8f8f;
}
.foot-trash{
    width:10px;
    height:12px;
    margin-left:5px;
}
.pill{
    width:55px;
    height:12px;
    margin-left:9px;
    border-radius:6px;
    background:#2e2e2e;
}

/* composition */
.comp-tabs{
    height:24px;
    padding-left:9px;
}
.comp-tab{
    width:154px;
}
.comp-tab .close{
    width:13px;
    padding-left:1px;
    box-sizing:border-box;
}
.comp-tab .swatch-sand{
    margin-left:1px;
}
.lock{
    width:8px;
    height:10px;
    margin-left:10px;
}
.comp-tab .tab-title{
    margin-left:8px;
    width:98px;
    white-space:nowrap;
    color:#8f8f8f;
}
.layer-tab{
    margin-left:32px;
    margin-top:2px;
    color:#8f8f8f;
}
.comp-sub{
    height:23px;
    flex:none;
    display:flex;
    align-items:center;
    padding-left:18px;
    border-bottom:1px solid #2c2c2c;
    box-sizing:border-box;
}
.comp-chip{
    width:60px;
    height:14px;
    line-height:14px;
    background:#141414;
    padding-left:7px;
    box-sizing:border-box;
}
.renderer{
    margin-left:585px;
    color:#8f8f8f;
}
.renderer-chip{
    margin-left:3px;
    width:67px;
    height:15px;
    line-height:15px;
    text-align:center;
    background:#1c1c1c;
    color:#a5a5a5;
}
.wrench{
    width:12px;
    height:12px;
    margin-left:8px;
}
.viewer{
    position:relative;
    flex:1;
    display:flex;
    align-items:center;
    justify-content:center;
}
.cam-label{
    position:absolute;
    left:9px;
    top:5px;
    font-size:10.500px;
    font-weight:700;
    color:#b8b8b8;
}
.canvas{
    width:427px;
    height:241px;
}
.bbox{
    fill:none;
    stroke:#b4b8d8;
}
.handles rect{
    fill:#6f74cf;
}
.viewer-bar{
    height:22px;
    flex:none;
    background:#1e1e1e;
    display:grid;
    grid-template-columns:19px 19px 62px 19px 20px 62px 20px 19px 20px 78px 20px 20px 97px 65px 20px 19px 20px 19px 22px 1fr;
    align-items:center;
    justify-items:center;
    padding-left:2px;
    color:#a5a5a5;
}
.viewer-bar svg{
    width:13px;
    height:13px;
}
.viewer-bar .ic-chev{
    width:8px;
    height:5px;
}
.viewer-bar .vb-flow{
    color:#aaa;
}
.vb-drop{
    width:calc(100% - 2px);
    height:17px;
    background:#1a1a1a;
    display:flex;
    align-items:center;
    justify-content:space-between;
    padding:0 4px;
    box-sizing:border-box;
}
.vb-on{
    width:18px;
    height:18px;
    background:#111;
    display:flex;
    align-items:center;
    justify-content:center;
}
.vb-time{
    color:#8c8c8c;
}
.vb-exp{
    justify-self:start;
    margin-left:2px;
}

/* info, preview */
.info{
    height:126px;
    flex:none;
}
.side-tabs{
    padding-left:11px;
}
.info .side-tabs{
    height:24px;
}
.info-tab{
    width:34px;
    gap:5px;
}
.audio-tab{
    margin-left:19px;
    margin-top:2px;
    color:#8f8f8f;
}
.info-body{
    display:flex;
    height:57px;
    border-bottom:1px solid #2c2c2c;
    margin:5px 4px 0 7px;
    font-size:9.500px;
    line-height:12px;
    color:#8a8a8a;
}
.info-swatch{
    display:block;
    width:17px;
    height:18px;
    margin-top:11px;
    background:#000;
}
.info-rgba{
    margin-left:5px;
    width:68px;
}
.info-cross{
    font-size:15px;
    width:13px;
    margin-top:19px;
    color:#bbb;
    font-weight:300;
}
.preview{
    height:50px;
    flex:none;
}
.preview .side-tabs{
    height:26px;
    gap:7px;
}
.transport{
    display:flex;
    justify-content:center;
    gap:10.500px;
    padding-right:6px;
    margin-top:7px;
}
.transport svg{
    width:11px;
    height:9px;
    fill:#a8a8a8;
}

/* character */
.character{
    flex:1;
    padding-left:5px;
}
.char-tabs{
    height:23px;
}
.libs{
    color:#8f8f8f;
    width:73px;
}
.char-tab{
    width:58px;
    height:22px;
    gap:5px;
    padding-top:2px;
}
.char-more{
    margin-left:34px;
}
.font-block{
    margin-top:9px;
    height:38px;
    display:flex;
}
.font-drops{
    width:108px;
    display:flex;
    flex-direction:column;
    gap:6px;
}
.font-drop{
    height:16px;
    display:flex;
    align-items:center;
    background:#191919;
    color:#c2c2c2;
    font-size:10.500px;
    padding-left:5px;
    box-sizing:border-box;
}
.font-drop span{
    width:87px;
}
.font-drop i{
    height:16px;
    width:16px;
    border-left:1px solid #2b2b2b;
    display:flex;
    align-items:center;
    justify-content:center;
}
.font-tools{
    margin-left:4px;
    width:18px;
}
.dropper{
    width:14px;
    height:16px;
    margin-left:2px;
}
.bw-chip{
    margin-top:6px;
    width:18px;
    height:14px;
    border:1px solid #bbb;
    box-sizing:border-box;
    background:linear-gradient(#111 50%,#fff 50%);
}
.colors{
    position:relative;
    margin-left:5px;
    width:38px;
    height:38px;
}
.col-fill{
    position:absolute;
    left:0;
    top:0;
    width:25px;
    height:25px;
    background:#d9001b;
}
.col-stroke{
    position:absolute;
    left:12px;
    top:12px;
    width:25px;
    height:25px;
    background:
        linear-gradient(to bottom right,transparent 47%,#c8102e 47%,#c8102e 53%,transparent 53%),
        linear-gradient(#111,#111) center / 15px 15px no-repeat,
        #fff;
    outline:1px solid #222;
}
.col-none{
    position:absolute;
    left:1px;
    top:26px;
    width:9px;
    height:10px;
    background:linear-gradient(to top right,#fff 44%,#c8102e 44%,#c8102e 56%,#fff 56%);
}
.col-swap{
    position:absolute;
    left:26px;
    top:-2px;
    font-size:11px;
    color:#ccc;
}
.char-row{
    height:19px;
    display:grid;
    grid-template-columns:22px 37px 10px 52px 38px 12px;
    align-items:center;
    justify-items:start;
}
.font-block + .char-row{
    margin-top:6px;
}
.val{
    color:#8c8c8c;
    white-space:nowrap;
}
.val b{
    font-weight:400;
    color:#4a94d8;
}
.val-dim{
    color:#595959;
}
.glyph{
    width:18px;
    font-family:"Liberation Serif",serif;
    font-size:15px;
    font-weight:700;
    color:#a8a8a8;
    line-height:16px;
    text-align:center;
    white-space:nowrap;
}
.glyph small{
    font-size:10px;
}
.glyph-va{
    font-family:Lato,sans-serif;
    font-size:10px;
    font-weight:400;
}
.glyph-svg,.glyph-base{
    width:18px;
    height:18px;
    fill:#a8a8a8;
    font-family:Lato,sans-serif;
    font-size:10px;
}
.glyph-svg{
    margin-left:24px;
}
.glyph-lead{
    font-size:7px;
}
.glyph-svg .dark{
    fill:#222;
    font-weight:700;
}
.glyph-svg .big{
    font-family:"Liberation Serif",serif;
    font-size:14px;
    font-weight:700;
}
.glyph-svg .cjk{
    font-family:"Noto Sans CJK JP",sans-serif;
    font-size:10px;
}
.glyph-base .tiny{
    font-size:7px;
}
.char-sep{
    height:1px;
    margin:2px 5px 0 0;
    background:#2d2d2d;
}
.char-stroke{
    margin-top:7px;
    height:15px;
}
.ic-lines{
    width:14px;
    height:12px;
    margin-left:1px;
}
.stroke-drop{
    grid-column:4 / span 3;
    width:101px;
    margin-left:3px;
    height:15px;
    background:#1b1b1b;
    display:flex;
    align-items:center;
    justify-content:flex-end;
    padding-right:4px;
    box-sizing:border-box;
}
.sep-b{
    margin-top:7px;
    margin-bottom:2px;
}
.sep-c{
    margin-top:6px;
}
.faux-row{
    height:16px;
    margin-top:5px;
    padding-left:23px;
    display:grid;
    grid-template-columns:22px 24px 24px 24px 24px 20px;
    align-items:center;
    font-family:"Liberation Serif",serif;
    font-size:13px;
    font-weight:700;
    color:#a8a8a8;
}
.faux-row small{
    font-size:10px;
}
.faux-row sup,.faux-row sub{
    font-size:7px;
    line-height:0;
    font-weight:400;
}
.ital{
    font-style:italic;
}
.check-row{
    margin-top:8px;
    height:16px;
    padding-left:5px;
    display:flex;
    align-items:center;
}
.check-label{
    margin-left:3px;
    width:71px;
    font-size:10.500px;
    color:#8f8f8f;
}

/* timeline */
.timeline{
    width:1003px;
    flex:none;
    box-sizing:border-box;
    border-top:2px solid #2f5f92;
    border-left:1px solid #2f5f92;
    border-right:1px solid #2f5f92;
    background:#232323;
    display:flex;
    flex-direction:column;
    min-height:0;
}
.tl-tabs{
    height:23px;
    flex:none;
    display:flex;
    align-items:center;
    padding-left:9px;
}
.tl-tabs .swatch-sand{
    margin-left:11px;
}
.tl-tabs .tab-title{
    margin-left:8px;
    width:42px;
}
.tl-body{
    flex:1;
    display:grid;
    grid-template-columns:554px minmax(0,1fr);
    min-height:0;
}
.tl-ctrl{
    height:34px;
    display:flex;
}
.tl-time{
    margin-left:10px;
    width:82px;
    margin-top:3px;
}
.time-big{
    font-size:14px;
    font-weight:700;
    line-height:14px;
    color:#4a9ae0;
}
.time-small{
    font-size:9px;
    line-height:13px;
    color:#2f6ca8;
}
.tl-search{
    width:242px;
    height:16px;
    margin-top:8px;
    background:#171717;
    display:flex;
    align-items:center;
    padding-left:5px;
    box-sizing:border-box;
}
.tl-switches{
    margin-left:113px;
    margin-top:8px;
    display:flex;
    gap:9px;
}
.tl-switches svg{
    width:14px;
    height:14px;
}
.tl-switches .sw-graph{
    margin-left:7px;
    width:16px;
}
.tl-head{
    height:15px;
    display:flex;
    align-items:center;
    background:#2b2b2b;
    border-top:1px solid #111;
    border-bottom:1px solid #111;
    box-sizing:border-box;
    margin-bottom:2px;
    font-size:8.500px;
    color:#7d7d7d;
}
.lh-eye{
    width:9px;
    height:7px;
    margin-left:6px;
    color:#aaa;
}
.lh-sound{
    width:10px;
    height:10px;
    margin-left:3px;
}
.lh-dot{
    width:6px;
    height:6px;
    margin-left:6px;
    border-radius:50%;
    background:#aaa;
}
.lh-lock{
    width:8px;
    height:10px;
    margin-left:6px;
}
.lh-tag{
    width:11px;
    height:11px;
    margin-left:19px;
}
.lh-num{
    margin-left:9px;
    width:30px;
}
.lh-name{
    width:194px;
}
.lh-sw{
    width:11px;
    height:10px;
}
.lh-parent{
    margin-left:111px;
}
.layer{
    height:15px;
    display:flex;
    align-items:center;
    background:#4a4a4a;
    border-bottom:1px solid #2e2e2e;
    box-sizing:border-box;
}
.l-eye{
    width:18px;
    height:14px;
    margin-left:2px;
    background:#3b3b3b;
    display:flex;
    align-items:center;
    justify-content:center;
}
.l-eye svg{
    width:9px;
    height:7px;
    color:#ddd;
}
.l-box{
    display:block;
    width:12px;
    height:14px;
    margin-left:1px;
    background:#3d3d3d;
}
.l-eye + .l-box{
    margin-left:12px;
}
.l-tri{
    margin-left:8px;
    width:0;
    height:0;
    border-left:6px solid #bbb;
    border-top:3.500px solid transparent;
    border-bottom:3.500px solid transparent;
}
.l-label{
    margin-left:3px;
    width:11px;
    height:11px;
    background:#7b84e6;
}
.l-num{
    margin-left:7px;
    width:27px;
    font-weight:700;
    color:#b3b3b3;
}
.l-star{
    width:10px;
    height:10px;
    color:#c4c4c4;
}
.l-name{
    margin-left:4px;
    width:200px;
    height:14px;
    line-height:14px;
    background:#a0a0a0;
    padding-left:2px;
    box-sizing:border-box;
    color:#0d0d0d;
    font-weight:700;
}
.l-whip{
    width:120px;
    display:flex;
    justify-content:flex-end;
    padding-right:2px;
    box-sizing:border-box;
    color:#8a8a8a;
}
.l-whip svg{
    width:8px;
    height:10px;
}
.l-parent{
    width:80px;
    height:14px;
    background:#1f1f1f;
    color:#c2c2c2;
    display:flex;
    align-items:center;
    justify-content:space-between;
    padding:0 5px;
    box-sizing:border-box;
    font-weight:700;
}
.tl-right{
    position:relative;
    min-width:0;
    border-left:1px solid #121212;
    background:#2a2a2a;
}
.tl-nav{
    margin:7px 14px 0 0;
    height:9px;
    background:#666;
    border:1px solid #111;
    box-sizing:border-box;
    display:flex;
    justify-content:space-between;
}
.tl-nav i{
    display:block;
    width:6px;
    background:#3f8fe0;
    border-radius:3px;
}
.ruler{
    height:17px;
    display:flex;
    color:#8b8b8b;
    font-size:9px;
    line-height:10px;
    background:#232323;
    white-space:nowrap;
}
.ruler span{
    flex:none;
    width:84px;
    text-align:center;
}
.ruler span::after{
    content:"";
    display:block;
    width:1px;
    height:3px;
    margin:3px auto 0;
    background:#8b8b8b;
}
.ruler .r-first{
    width:47px;
    text-align:left;
    padding-left:2px;
    box-sizing:border-box;
}
.ruler .r-first::after{
    display:none;
}
.work-row{
    height:14px;
    display:flex;
    align-items:center;
    background:#232323;
}
.work{
    width:431px;
    height:14px;
    background:#676767;
    display:flex;
    justify-content:space-between;
}
.work i{
    display:block;
    width:5px;
    background:#3f8fe0;
    border-radius:3px;
}
.shield{
    width:10px;
    height:11px;
    margin-left:3px;
}
.green-row{
    height:2px;
    padding-left:5px;
    background:#232323;
    margin-bottom:2px;
}
.green{
    width:420px;
    height:2px;
    background:#37a53f;
}
.track{
    height:15px;
    width:431px;
    padding-left:5px;
    box-sizing:border-box;
    background:#4a4a4a;
    border-bottom:1px solid #2e2e2e;
    position:relative;
}
.bar{
    width:420px;
    height:14px;
    background:#5a61c6;
    border-top:1px solid #8d92d6;
    box-sizing:border-box;
}
.track-ic{
    position:absolute;
    left:434px;
    top:1px;
    width:13px;
    height:12px;
}
.cti{
    position:absolute;
    left:0;
    top:15px;
    width:11px;
    height:195px;
    display:flex;
    flex-direction:column;
    align-items:center;
}
.cti svg{
    width:11px;
    height:13px;
}
.cti i{
    display:block;
    flex:1;
    width:1px;
    background:#3f8fe0;
}
.tl-foot{
    height:12px;
    flex:none;
    background:#1c1c1c;
    display:flex;
    align-items:center;
    padding-left:5px;
    gap:5px;
    overflow:hidden;
}
.tl-foot svg{
    width:11px;
    height:11px;
}
.tf-toggle{
    margin-left:277px;
    width:222px;
}
.tl-foot .tf-small{
    width:9px;
    height:4px;
}
.tl-foot .tf-slider{
    width:50px;
    height:8px;
    margin-left:6px;
}
.tl-foot .tf-big{
    width:16px;
    height:8px;
    margin-left:-3px;
}

/* paragraph */
.paragraph{
    flex:1;
    min-width:0;
    margin-top:3px;
    padding-left:10px;
}
.para-tabs{
    height:22px;
}
.para-tabs .tab-title{
    width:55px;
}
.align-row{
    margin-top:5px;
    height:18px;
    display:flex;
    align-items:center;
    color:#a3a3a3;
}
.align-row svg{
    width:14px;
    height:12px;
    margin-left:8px;
}
.align-row > svg:first-child{
    margin-left:-3px;
}
.align-row .a-gap{
    margin-left:13px;
}
.align-on{
    width:17px;
    height:18px;
    margin-left:7px;
    background:#121212;
    display:flex;
    align-items:center;
    justify-content:center;
    color:#4a86c8;
}
.align-row .align-on svg{
    margin:0;
}
.align-on + svg{
    margin-left:6px;
}
.para-sep{
    height:1px;
    margin-top:4px;
    background:#2d2d2d;
}
.para-grid{
    margin:3px 0 0 -5px;
    display:grid;
    grid-template-columns:65px 60px 1fr;
    grid-auto-rows:16px;
}
.pi{
    display:flex;
    align-items:center;
    gap:5px;
}
.pi svg{
    width:14px;
    height:11px;
    color:#9a9a9a;
}
.flip{
    transform:scaleX(-1);
}
.pi-3 svg{
    width:12px;
}
.pi-dir{
    margin-left:-3px;
    gap:4px;
    font-size:13px;
}
.dir-on{
    color:#4a94d8;
    background:#121212;
    padding:0 2px;
}
.dir{
    color:#a0a0a0;
}

/* context menus */
.ctx{
    position:absolute;
    background:#bfbfbf;
    border-radius:5px;
    box-shadow:0 2px 6px rgba(0,0,0,0.5);
    font-family:"Liberation Sans",Arial,sans-serif;
    font-size:12.700px;
    color:#1c1c1c;
}
.ctx-layer{
    left:214px;
    top:546px;
    width:121px;
    padding:3px 0;
}
.ctx-cols{
    left:335px;
    top:494px;
    width:110px;
    height:240px;
    padding-top:4.500px;
    box-sizing:border-box;
}
.ctx-item{
    position:relative;
    height:16.850px;
    line-height:16.850px;
    padding-left:19px;
    white-space:nowrap;
}
.ctx-item.is-off{
    color:#858585;
}
.ctx-item.is-hot{
    background:#1e6ed6;
    color:#fff;
}
.ctx-item.is-checked::before{
    content:"\2713";
    position:absolute;
    left:4px;
    top:0;
    font-family:"DejaVu Sans",sans-serif;
    font-weight:700;
    font-size:14px;
}
.ctx-sep{
    height:1px;
    margin:4px 0 6px;
    background:#a9a9a9;
}
.ctx-arrow{
    position:absolute;
    right:10px;
    top:0;
    font-size:11px;
}
.cursor{
    position:absolute;
    left:362px;
    top:631px;
    width:10px;
    height:14px;
}
```
